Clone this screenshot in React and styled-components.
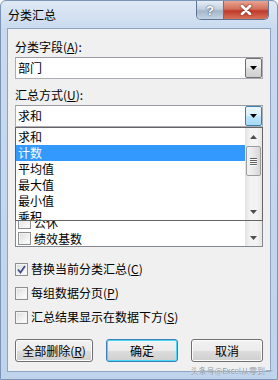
import React, { useState } from 'react';
import styled, { createGlobalStyle, css } from 'styled-components';

const GlobalStyle = createGlobalStyle`
  html, body {
    margin: 0;
    padding: 0;
    background: #ffffff;
  }
  body {
    font-family: "Noto Sans CJK SC", "Liberation Sans", sans-serif;
    font-size: 12px;
    color: #000000;
  }
  * {
    box-sizing: border-box;
  }
`;

const Arrow = ({ dir = 'down', color = '#000', w = 7, h = 4 }) => (
  <svg width={w} height={h} viewBox={`0 0 ${w} ${h}`}>
    {dir === 'down' ? (
      <polygon points={`0,0 ${w},0 ${w / 2},${h}`} fill={color} />
    ) : (
      <polygon points={`0,${h} ${w},${h} ${w / 2},0`} fill={color} />
    )}
  </svg>
);

const App = () => {
  const [fields] = useState(['部门']);
  const [methods] = useState(['求和', '计数', '平均值', '最大值', '最小值', '乘积']);
  const [selected] = useState(1);
  const [items] = useState(['姓名', '部门', '基本工资', '岗位工资', '公休', '绩效基数']);

  return (
    <>
      <GlobalStyle />
      <Window>
        <TitleBar>
          <Title>分类汇总</Title>
          <CaptionButtons>
            <HelpButton>?</HelpButton>
            <CloseButton>
              <svg width="12" height="10" viewBox="0 0 12 10">
                <path d="M2 1 L10 9 M10 1 L2 9" stroke="#ffffff" strokeWidth="2.6" strokeLinecap="round" />
              </svg>
            </CloseButton>
          </CaptionButtons>
        </TitleBar>

        <Client>
          <Label>
            分类字段(<u>A</u>):
          </Label>
          <Combo>
            <ComboText>{fields[0]}</ComboText>
            <ComboButton>
              <Arrow />
            </ComboButton>
          </Combo>

          <Label $gap>
            汇总方式(<u>U</u>):
          </Label>
          <Combo>
            <ComboText>{methods[0]}</ComboText>
            <ComboButton $hover>
              <Arrow />
            </ComboButton>
            <Popup>
              <PopupItems>
                {methods.map((m, i) => (
                  <PopupItem key={m} $active={i === selected}>
                    {m}
                  </PopupItem>
                ))}
              </PopupItems>
              <Scrollbar>
                <ScrollArrow>
                  <Arrow dir="up" color="#4d4d4d" w={7} h={4} />
                </ScrollArrow>
                <Thumb>
                  <Grip />
                  <Grip />
                  <Grip />
                  <Grip />
                </Thumb>
                <Track />
                <ScrollArrow>
                  <Arrow color="#4d4d4d" w={7} h={4} />
                </ScrollArrow>
              </Scrollbar>
            </Popup>
          </Combo>

          <Label $gap>
            选定汇总项(<u>D</u>):
          </Label>
          <CheckList>
            <CheckItems>
              {items.map((it) => (
                <CheckItem key={it}>
                  <Box />
                  <span>{it}</span>
                </CheckItem>
              ))}
            </CheckItems>
            <Scrollbar>
              <Track />
              <ScrollArrow>
                <Arrow color="#4d4d4d" w={7} h={4} />
              </ScrollArrow>
            </Scrollbar>
          </CheckList>

          <Option $first>
            <Box>
              <svg width="9" height="9" viewBox="0 0 9 9">
                <path d="M1 4.5 L3.5 7.5 L8 1" stroke="#3d4f86" strokeWidth="1.8" fill="none" />
              </svg>
            </Box>
            <OptionText>
              替换当前分类汇总(<u>C</u>)
            </OptionText>
          </Option>
          <Option>
            <Box />
            <OptionText>
              每组数据分页(<u>P</u>)
            </OptionText>
          </Option>
          <Option>
            <Box />
            <OptionText>
              汇总结果显示在数据下方(<u>S</u>)
            </OptionText>
          </Option>

          <ButtonRow>
            <Button $w={78}>
              <span>
                全部删除(<u>R</u>)
              </span>
            </Button>
            <Button $w={72} $focus>
              确定
            </Button>
            <Button $w={72}>取消</Button>
          </ButtonRow>
        </Client>

        <Watermark>头条号@Excel从零到一</Watermark>
      </Window>
    </>
  );
};

const Window = styled.div`
  position: relative;
  width: 278px;
  height: 380px;
  display: flex;
  flex-direction: column;
  border: 1px solid #7c95b5;
  border-radius: 6px 6px 0 0;
  background: linear-gradient(180deg, #dfe9f5 0px, #c9daef 28px, #bfd3ec 100%);
`;

const TitleBar = styled.div`
  height: 27px;
  flex-shrink: 0;
  display: flex;
  align-items: center;
  padding-left: 7px;
`;

const Title = styled.div`
  font-size: 12px;
  line-height: 16px;
  margin-top: 1px;
`;

const CaptionButtons = styled.div`
  margin-left: auto;
  margin-right: 8px;
  align-self: flex-start;
  display: flex;
  border: 1px solid #5e7493;
  border-top: none;
  border-radius: 0 0 5px 5px;
  overflow: hidden;
  height: 19px;
`;

const HelpButton = styled.div`
  width: 27px;
  display: flex;
  align-items: center;
  justify-content: center;
  font-family: "Liberation Sans", sans-serif;
  font-weight: bold;
  font-size: 13px;
  color: #ffffff;
  text-shadow: 0 0 2px #445a7a, 0 0 1px #445a7a;
  background: linear-gradient(180deg, #e6eef7 0%, #c3d0df 45%, #a5b6ca 55%, #c4d4e6 100%);
  border-right: 1px solid #5e7493;
`;

const CloseButton = styled.div`
  width: 44px;
  display: flex;
  align-items: center;
  justify-content: center;
  background: linear-gradient(180deg, #e8a493 0%, #d26f5b 45%, #c0392b 55%, #d8735b 100%);
  svg {
    filter: drop-shadow(0 0 1px #7a1c10);
  }
`;

const Client = styled.div`
  flex: 1;
  margin: 0 6px 7px 6px;
  padding: 10px 7px 0 7px;
  background: #f0f0f0;
  border: 1px solid #8ea3bf;
  display: flex;
  flex-direction: column;
`;

const Label = styled.div`
  height: 16px;
  line-height: 16px;
  margin-top: ${({ $gap }) => ($gap ? '8px' : '0')};
`;

const Combo = styled.div`
  position: relative;
  height: 22px;
  flex-shrink: 0;
  margin-top: 2px;
  display: flex;
  background: #ffffff;
  border: 1px solid #abadb3;
  border-top-color: #9a9ca3;
`;

const ComboText = styled.div`
  flex: 1;
  padding-left: 2px;
  line-height: 20px;
`;

const ComboButton = styled.div`
  width: 17px;
  display: flex;
  align-items: center;
  justify-content: center;
  border: 1px solid #707070;
  border-radius: 2px;
  background: linear-gradient(180deg, #f2f2f2 0%, #ebebeb 50%, #dddddd 51%, #cfcfcf 100%);
  ${({ $hover }) =>
    $hover &&
    css`
      border-color: #3c7fb1;
      background: linear-gradient(180deg, #eaf6fd 0%, #d9f0fc 50%, #bee6fd 51%, #a7d9f5 100%);
    `}
`;

const Popup = styled.div`
  position: absolute;
  top: calc(100% + 1px);
  left: -1px;
  right: -1px;
  height: 94px;
  z-index: 2;
  display: flex;
  background: #ffffff;
  border: 1px solid #646464;
`;

const PopupItems = styled.div`
  flex: 1;
  overflow: hidden;
  padding-top: 1px;
`;

const PopupItem = styled.div`
  height: 16px;
  line-height: 16px;
  padding-left: 2px;
  ${({ $active }) =>
    $active &&
    css`
      background: #3399ff;
      color: #ffffff;
    `}
`;

const Scrollbar = styled.div`
  width: 17px;
  display: flex;
  flex-direction: column;
  background: linear-gradient(90deg, #e3e3e3 0%, #f3f3f3 30%, #f3f3f3 70%, #e6e6e6 100%);
`;

const ScrollArrow = styled.div`
  height: 17px;
  display: flex;
  align-items: center;
  justify-content: center;
`;

const Thumb = styled.div`
  height: 30px;
  margin: 1px 1px 0 1px;
  border: 1px solid #9b9b9b;
  border-radius: 2px;
  background: linear-gradient(90deg, #f3f3f3 0%, #e8e8e8 50%, #d6d6d6 100%);
  display: flex;
  flex-direction: column;
  align-items: center;
  justify-content: center;
  gap: 1px;
`;

const Grip = styled.div`
  width: 7px;
  height: 1px;
  background: #5f5f5f;
  box-shadow: 0 1px 0 #ffffff;
`;

const Track = styled.div`
  flex: 1;
`;

const CheckList = styled.div`
  height: 94px;
  flex-shrink: 0;
  margin-top: 2px;
  display: flex;
  background: #ffffff;
  border: 1px solid #828790;
`;

const CheckItems = styled.div`
  flex: 1;
  overflow: hidden;
  display: flex;
  flex-direction: column;
  justify-content: flex-end;
`;

const CheckItem = styled.div`
  height: 16px;
  flex-shrink: 0;
  display: flex;
  align-items: center;
  gap: 3px;
  padding-left: 2px;
`;

const Box = styled.div`
  width: 13px;
  height: 13px;
  flex-shrink: 0;
  display: flex;
  align-items: center;
  justify-content: center;
  border: 1px solid #8e8f8f;
  background: linear-gradient(135deg, #dcdcdc 0%, #f2f2f2 60%, #ffffff 100%);
  box-shadow: inset 0 0 0 1px #f4f4f4;
`;

const Option = styled.div`
  height: 16px;
  display: flex;
  align-items: center;
  gap: 3px;
  margin-top: ${({ $first }) => ($first ? '14px' : '8px')};
`;

const OptionText = styled.span`
  line-height: 16px;
  white-space: nowrap;
`;

const ButtonRow = styled.div`
  display: flex;
  justify-content: space-between;
  margin-top: 14px;
`;

const Button = styled.div`
  width: ${({ $w }) => $w}px;
  height: 23px;
  display: flex;
  align-items: center;
  justify-content: center;
  border: 1px solid #707070;
  border-radius: 3px;
  background: linear-gradient(180deg, #f2f2f2 0%, #ebebeb 50%, #dddddd 51%, #cfcfcf 100%);
  box-shadow: inset 0 0 0 1px #fcfcfc;
  ${({ $focus }) =>
    $focus &&
    css`
      border-color: #3c7fb1;
      box-shadow: inset 0 0 0 1px #48d8fb;
    `}
`;

const Watermark = styled.div`
  position: absolute;
  right: 4px;
  bottom: 3px;
  font-size: 8px;
  line-height: 10px;
  color: #8b95a3;
  text-shadow: 0 0 1px #ffffff;
`;

export default App;
